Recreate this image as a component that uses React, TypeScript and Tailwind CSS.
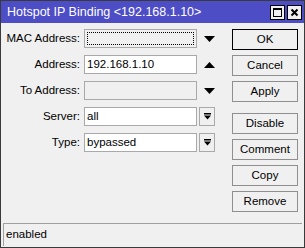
import type { ReactNode } from 'react'

const font = { fontFamily: '"Liberation Sans", Arial, sans-serif' }

function DropIcon() {
  return (
    <svg width="9" height="9" viewBox="0 0 9 9">
      <rect x="1" y="1" width="7" height="1.5" fill="#000" />
      <path d="M1 3.5 H8 L4.5 7.5 Z" fill="#000" />
    </svg>
  )
}

function Arrow({ up }: { up?: boolean }) {
  return (
    <svg width="11" height="6" viewBox="0 0 11 6" className="ml-[7px]">
      <path d={up ? 'M0 6 H11 L5.5 0 Z' : 'M0 0 H11 L5.5 6 Z'} fill="#000" />
    </svg>
  )
}

function Row({ label, children }: { label: string; children: ReactNode }) {
  return (
    <div className="flex h-[19px] items-center">
      <div className="w-[80px] pr-[1px] text-right text-[11.5px] text-black">{label}</div>
      <div className="ml-[3px] flex items-center">{children}</div>
    </div>
  )
}

function Field({ value, disabled, focus }: { value?: string; disabled?: boolean; focus?: boolean }) {
  return (
    <div
      className={`flex h-[19px] w-[113px] items-center border border-[#a9a9a9] px-[2px] text-[11.5px] text-black ${
        disabled ? 'bg-[#f0f0f0]' : 'bg-white'
      }`}
    >
      {focus ? <div className="h-[13px] w-full border border-dotted border-black" /> : value}
    </div>
  )
}

function Btn({ label, def }: { label: string; def?: boolean }) {
  return (
    <div
      className={`flex h-[21px] w-[66px] items-center justify-center border text-[11.5px] text-black bg-[#f0f0f0] ${
        def ? 'border-black' : 'border-[#8f8f8f]'
      }`}
    >
      {label}
    </div>
  )
}

export default function App() {
  return (
    <div className="flex h-[248px] w-[305px] flex-col border border-[#3a3a3a] bg-[#f0f0f0]" style={font}>
      <div className="flex h-[22px] shrink-0 items-center justify-between bg-[#4d4dc6] pl-[6px] pr-[2px]">
        <span className="text-[12.5px] text-white">Hotspot IP Binding &lt;192.168.1.10&gt;</span>
        <div className="flex gap-[2px]">
          <div className="flex h-[15px] w-[15px] items-center justify-center border border-black bg-[#f0f0f0]">
            <div className="h-[9px] w-[9px] border border-black border-t-2" />
          </div>
          <div className="flex h-[15px] w-[15px] items-center justify-center border border-black bg-[#f0f0f0]">
            <svg width="9" height="9" viewBox="0 0 9 9">
              <path d="M1.5 1.5 L7.5 7.5 M7.5 1.5 L1.5 7.5" stroke="#000" strokeWidth="2" />
            </svg>
          </div>
        </div>
      </div>
      <div className="flex flex-1 pt-[6px]">
        <div className="flex flex-col gap-[7px]">
          <Row label="MAC Address:">
            <Field disabled focus />
            <Arrow />
          </Row>
          <Row label="Address:">
            <Field value="192.168.1.10" />
            <Arrow up />
          </Row>
          <Row label="To Address:">
            <Field disabled />
            <Arrow />
          </Row>
          <Row label="Server:">
            <Field value="all" />
            <div className="ml-[2px] flex h-[19px] w-[16px] items-center justify-center border border-[#a9a9a9] bg-[#f0f0f0]">
              <DropIcon />
            </div>
          </Row>
          <Row label="Type:">
            <Field value="bypassed" />
            <div className="ml-[2px] flex h-[19px] w-[16px] items-center justify-center border border-[#a9a9a9] bg-[#f0f0f0]">
              <DropIcon />
            </div>
          </Row>
        </div>
        <div className="ml-auto mr-[6px] flex flex-col">
          <Btn label="OK" def />
          <div className="mt-[5px] flex flex-col gap-[5px]">
            <Btn label="Cancel" />
            <Btn label="Apply" />
          </div>
          <div className="mt-[11px] flex flex-col gap-[5px]">
            <Btn label="Disable" />
            <Btn label="Comment" />
            <Btn label="Copy" />
            <Btn label="Remove" />
          </div>
        </div>
      </div>
      <div className="mx-[2px] mb-[1px] flex h-[23px] items-center border-t border-l border-[#a0a0a0] pl-[2px] text-[11.5px] text-black">
        enabled
      </div>
    </div>
  )
}
